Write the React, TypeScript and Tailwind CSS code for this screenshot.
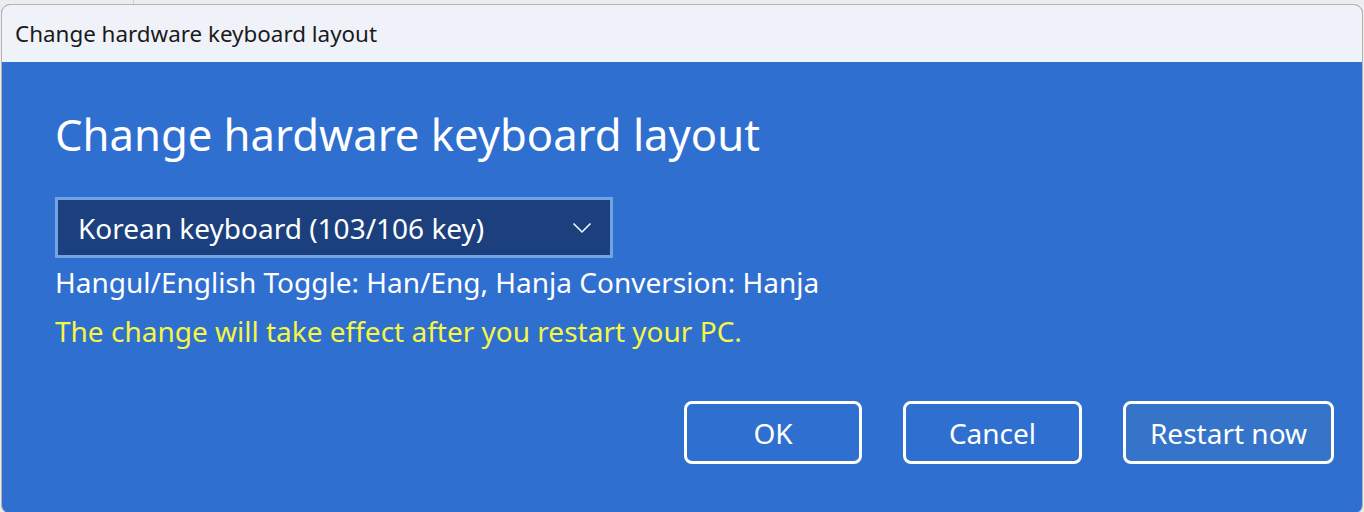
export default function App() {
  return (
    <div className="relative h-[512px] w-[1364px] overflow-hidden bg-[#ededed] font-['Noto_Sans',sans-serif]">
      <div className="absolute left-[133px] top-0 h-[6px] w-px bg-[#d0d0d0]" />
      <div className="absolute left-[1px] top-[4px] flex h-[510px] w-[1362px] flex-col overflow-hidden rounded-[9px] border border-[#b3b3b3] bg-[#2f6fd0]">
        <div className="flex h-[57px] items-center bg-[#eff2f8] pl-[13px] text-[22.4px] text-[#1a1a1a]">
          Change hardware keyboard layout
        </div>
        <div className="flex flex-1 flex-col px-[53px]">
          <h1 className="mt-[42px] text-[43.6px] leading-[60px] text-white">
            Change hardware keyboard layout
          </h1>
          <button className="mt-[33px] flex h-[61px] w-[558px] items-center justify-between border-[3px] border-[#74a3e4] bg-[#1b407d] pl-[20px] pr-[18px] text-left text-[28px] text-white">
            <span>Korean keyboard (103/106 key)</span>
            <svg width="20" height="12" viewBox="0 0 20 12" fill="none">
              <polyline points="1.5,1.5 10,10 18.5,1.5" stroke="white" strokeWidth="1.5" />
            </svg>
          </button>
          <p className="mt-[6px] text-[28px] leading-[36px] text-white">
            Hangul/English Toggle: Han/Eng, Hanja Conversion: Hanja
          </p>
          <p className="mt-[13px] text-[28px] leading-[36px] text-[#f6f644]">
            The change will take effect after you restart your PC.
          </p>
          <div className="mt-[52px] flex justify-end gap-[41px]">
            <button className="h-[63px] w-[178px] rounded-[8px] border-[3px] border-white text-[28px] text-white">
              OK
            </button>
            <button className="h-[63px] w-[179px] rounded-[8px] border-[3px] border-white text-[28px] text-white">
              Cancel
            </button>
            <button className="mr-[-25px] h-[63px] w-[211px] rounded-[8px] border-[3px] border-white bg-[#3574c9] text-[28px] text-white">
              Restart now
            </button>
          </div>
        </div>
      </div>
    </div>
  );
}
